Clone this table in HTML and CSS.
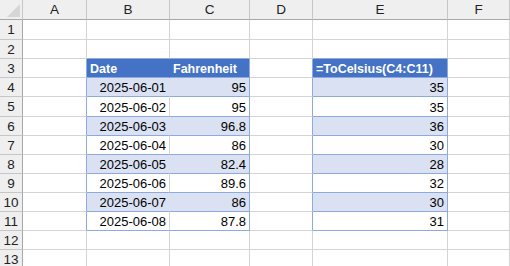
FILE: index.html
```html
<!DOCTYPE html>
<html>
<head>
<meta charset="utf-8">
<link rel="stylesheet" href="styles.css">
</head>
<body>
<div class="sheet">
  <div class="c ch corner"></div><div class="c ch">A</div><div class="c ch">B</div><div class="c ch">C</div><div class="c ch">D</div><div class="c ch">E</div><div class="c ch">F</div>

  <div class="c rh">1</div><div class="c"></div><div class="c"></div><div class="c"></div><div class="c"></div><div class="c"></div><div class="c"></div>
  <div class="c rh">2</div><div class="c"></div><div class="c top"></div><div class="c top"></div><div class="c"></div><div class="c top"></div><div class="c"></div>

  <div class="c rh">3</div><div class="c edge"></div><div class="c hd inner-hd">Date</div><div class="c hd edge">Fahrenheit</div><div class="c edge"></div><div class="c hd edge">=ToCelsius(C4:C11)</div><div class="c"></div>

  <div class="c rh">4</div><div class="c edge"></div><div class="c n band inner-band">2025-06-01</div><div class="c n band edge">95</div><div class="c edge"></div><div class="c n band edge">35</div><div class="c"></div>
  <div class="c rh">5</div><div class="c edge"></div><div class="c n wt">2025-06-02</div><div class="c n wt edge">95</div><div class="c edge"></div><div class="c n wt edge">35</div><div class="c"></div>
  <div class="c rh">6</div><div class="c edge"></div><div class="c n band inner-band">2025-06-03</div><div class="c n band edge">96.8</div><div class="c edge"></div><div class="c n band edge">36</div><div class="c"></div>
  <div class="c rh">7</div><div class="c edge"></div><div class="c n wt">2025-06-04</div><div class="c n wt edge">86</div><div class="c edge"></div><div class="c n wt edge">30</div><div class="c"></div>
  <div class="c rh">8</div><div class="c edge"></div><div class="c n band inner-band">2025-06-05</div><div class="c n band edge">82.4</div><div class="c edge"></div><div class="c n band edge">28</div><div class="c"></div>
  <div class="c rh">9</div><div class="c edge"></div><div class="c n wt">2025-06-06</div><div class="c n wt edge">89.6</div><div class="c edge"></div><div class="c n wt edge">32</div><div class="c"></div>
  <div class="c rh">10</div><div class="c edge"></div><div class="c n band inner-band">2025-06-07</div><div class="c n band edge">86</div><div class="c edge"></div><div class="c n band edge">30</div><div class="c"></div>
  <div class="c rh">11</div><div class="c edge"></div><div class="c n wt">2025-06-08</div><div class="c n wt edge">87.8</div><div class="c edge"></div><div class="c n wt edge">31</div><div class="c"></div>

  <div class="c rh">12</div><div class="c"></div><div class="c"></div><div class="c"></div><div class="c"></div><div class="c"></div><div class="c"></div>
  <div class="c rh">13</div><div class="c"></div><div class="c"></div><div class="c"></div><div class="c"></div><div class="c"></div><div class="c"></div>
</div>
</body>
</html>
```
FILE: styles.css
```css
html, body {
  margin: 0;
  padding: 0;
  background: #ffffff;
}
body {
  width: 510px;
  height: 266px;
  overflow: hidden;
  font-family: "Liberation Sans", Arial, sans-serif;
  font-size: 13px;
  color: #000000;
}
.sheet {
  display: grid;
  grid-template-columns: 23px 64px 83px 80px 63px 135px 1fr;
  grid-template-rows: 20px 20px 19px 19px 19px 20px 19px 19px 19px 19px 19px 19px 19px 19px;
  width: 510px;
}
.c {
  box-sizing: border-box;
  border-right: 1px solid #d4d4d4;
  border-bottom: 1px solid #d4d4d4;
  padding: 0 3px;
  display: flex;
  align-items: center;
  padding-top: 1px;
  white-space: nowrap;
  overflow: hidden;
}
.ch {
  background: #efefef;
  justify-content: center;
  border-right-color: #c6c6c6;
  border-bottom-color: #a8a8a8;
  color: #222222;
  font-size: 13.5px;
  padding: 0;
}
.rh {
  background: #efefef;
  justify-content: center;
  border-right-color: #a8a8a8;
  border-bottom-color: #c6c6c6;
  color: #222222;
  font-size: 13.5px;
  padding: 0;
}
.corner {
  justify-content: flex-end;
  align-items: flex-end;
  padding: 0 2px 2px 0;
}
.corner::after {
  content: "";
  width: 13px;
  height: 13px;
  background: #d6d6d6;
  clip-path: polygon(100% 0, 100% 100%, 0 100%);
}
.n {
  justify-content: flex-end;
  padding-right: 3px;
}
.top {
  border-bottom-color: #8ea9db;
}
.edge {
  border-right-color: #8ea9db;
}
.hd {
  background: #4472c4;
  color: #ffffff;
  font-weight: bold;
  font-size: 12.5px;
  border-bottom-color: #8ea9db;
}
.inner-hd {
  border-right-color: #4472c4;
}
.band {
  background: #d9e1f2;
  border-bottom-color: #8ea9db;
}
.inner-band {
  border-right-color: #d9e1f2;
}
.wt {
  border-bottom-color: #8ea9db;
}
```
